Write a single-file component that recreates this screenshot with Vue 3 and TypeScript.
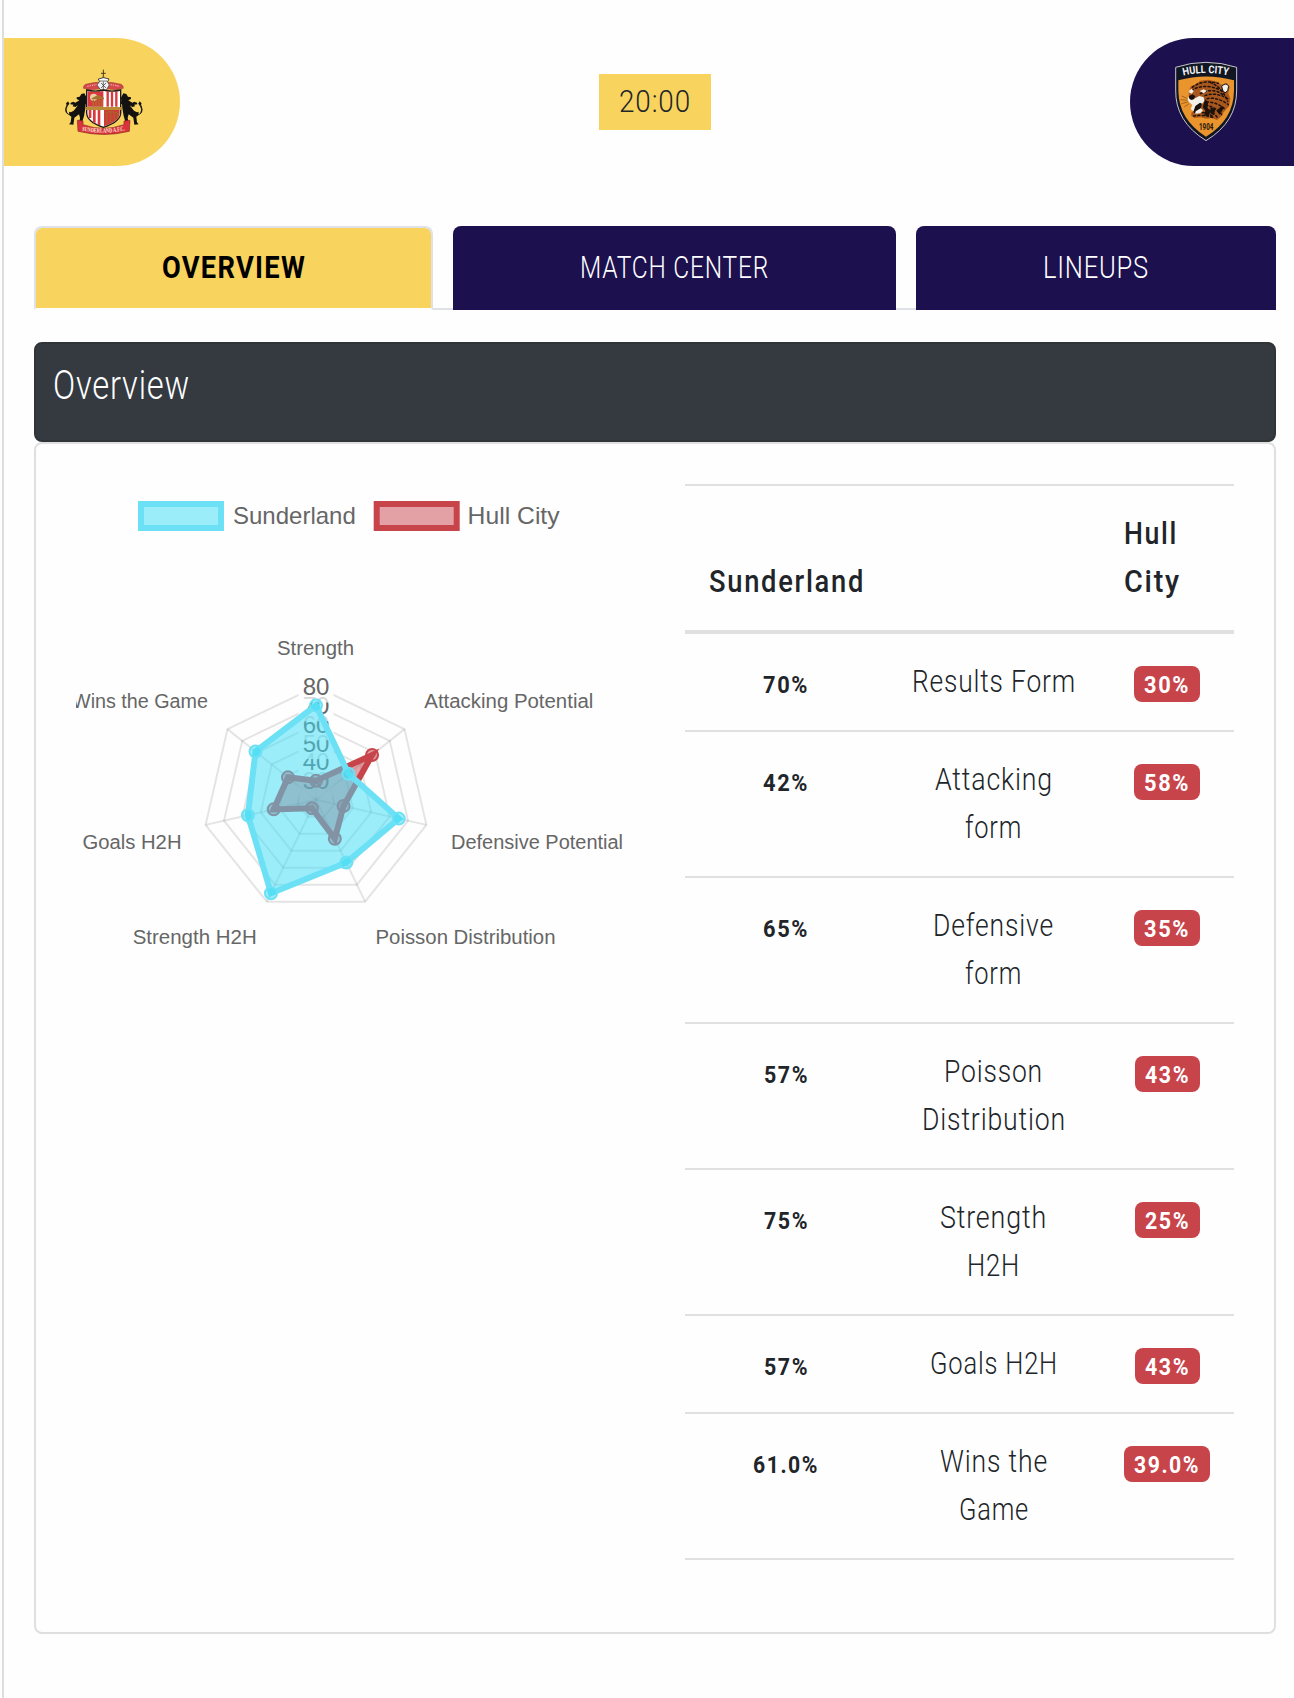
<script setup lang="ts">
import { h } from 'vue'

interface FitProps {
  text: string
  w: number
  size?: number
  weight?: number
  height?: number
  base?: number
  track?: number
}

// One line of condensed lettering, set to an exact width.
const FitText = (p: FitProps) =>
  h('svg', { width: p.w, height: p.height ?? 48, style: { display: 'block', overflow: 'visible' } }, [
    h(
      'text',
      {
        x: 0,
        y: p.base ?? 34,
        textLength: p.w,
        lengthAdjust: 'spacingAndGlyphs',
        fill: 'currentColor',
        'font-family': 'Roboto, "Liberation Sans", sans-serif',
        'font-size': p.size ?? 32,
        'font-weight': p.weight ?? 300,
        'letter-spacing': p.track ?? 1,
      },
      p.text,
    ),
  ])
FitText.props = ['text', 'w', 'size', 'weight', 'height', 'base', 'track']

interface Line { t: string; w: number }
interface Row { home: string; away: string; hw: number; lines: Line[] }

const rows: Row[] = [
  { home: '70%', away: '30%', hw: 46, lines: [{ t: 'Results Form', w: 164 }] },
  { home: '42%', away: '58%', hw: 46, lines: [{ t: 'Attacking', w: 118 }, { t: 'form', w: 57 }] },
  { home: '65%', away: '35%', hw: 46, lines: [{ t: 'Defensive', w: 121 }, { t: 'form', w: 57 }] },
  { home: '57%', away: '43%', hw: 45, lines: [{ t: 'Poisson', w: 99 }, { t: 'Distribution', w: 144 }] },
  { home: '75%', away: '25%', hw: 45, lines: [{ t: 'Strength', w: 107 }, { t: 'H2H', w: 53 }] },
  { home: '57%', away: '43%', hw: 45, lines: [{ t: 'Goals H2H', w: 128 }] },
  { home: '61.0%', away: '39.0%', hw: 66, lines: [{ t: 'Wins the', w: 108 }, { t: 'Game', w: 70 }] },
]

const cx = 316
const cy = 799.7
const radius = 113.2
const min = 20
const max = 80
const ticks = [30, 40, 50, 60, 70, 80]

const pointAt = (value: number, i: number): [number, number] => {
  const r = ((value - min) / (max - min)) * radius
  const a = (Math.PI * 2 * i) / 7
  return [cx + r * Math.sin(a), cy - r * Math.cos(a)]
}
const ring = (values: number[]) =>
  values.map((v, i) => pointAt(v, i).map((n) => n.toFixed(1)).join(',')).join(' ')
const tickY = (v: number) => pointAt(v, 0)[1]

const sets = [
  { key: 'away', values: [30, 58, 35, 43, 25, 43, 39] },
  { key: 'home', values: [70, 42, 65, 57, 75, 57, 61] },
]

const labels = [
  { t: 'Strength', x: 277, y: 655, w: 77 },
  { t: 'Attacking Potential', x: 424.3, y: 708, w: 169 },
  { t: 'Defensive Potential', x: 451, y: 849, w: 172 },
  { t: 'Poisson Distribution', x: 375.5, y: 944, w: 180 },
  { t: 'Strength H2H', x: 132.7, y: 944, w: 124 },
  { t: 'Goals H2H', x: 82.5, y: 849, w: 99 },
  { t: 'Wins the Game', x: 72, y: 708, w: 136 },
]
</script>

<template>
  <main class="page">
    <header class="match">
      <div class="club club-home">
        <svg class="crest-home" viewBox="190 145 245 205" width="81.7" height="68.3">
          <path d="M311 150V180M304 161H318" stroke="#4a3a22" stroke-width="3" fill="none" />
          <circle cx="311" cy="172" r="3" fill="#8a6a2c" />
          <path d="M296 178Q311 170 328 178L324 186H300Z" fill="#fff" stroke="#222" stroke-width="2.5" />
          <path d="M251 206q-1-8 6-12Q311 180 365 194q7 4 6 12-14 2-20 5-40-8-80 0-6-3-20-5Z" fill="#d4474a" stroke="#8a3a2e" stroke-width="1.5" />
          <path d="M263 200Q311 188 359 200" stroke="#f3b6a8" stroke-width="3.5" stroke-dasharray="4 3" fill="none" />
          <path d="M301 184h21l7 12-9 15h-17l-11-15Z" fill="#eef0f2" stroke="#333" stroke-width="2" />
          <path d="M304 190l15 15M319 190l-15 15M311 186v24" stroke="#333" stroke-width="2" />
          <g fill="#141211">
            <path d="M254 221l-9 2-5 8-9 2v5l8 4-12 7-6-3-8 3-1 5 9 1-2 5 8 2 8-5-13 16-9 5-5-2 1 11 6 4-2 17-5 6 13 1 3-21 14-10 3 11-2 10-5 5 12 2 7-23 4-23 1-13 12-1 2-8-12 1 1-11Z" />
            <path d="M215 286q-22-3-15-20 5-9 2-17M202 279q-8-8-1-22" fill="none" stroke="#141211" stroke-width="3" />
            <path d="M199 252l6-7 4 7-5 7Z" />
          </g>
          <g fill="#141211" transform="matrix(-1 0 0 1 625 0)">
            <path d="M254 221l-9 2-5 8-9 2v5l8 4-12 7-6-3-8 3-1 5 9 1-2 5 8 2 8-5-13 16-9 5-5-2 1 11 6 4-2 17-5 6 13 1 3-21 14-10 3 11-2 10-5 5 12 2 7-23 4-23 1-13 12-1 2-8-12 1 1-11Z" />
            <path d="M215 286q-22-3-15-20 5-9 2-17M202 279q-8-8-1-22" fill="none" stroke="#141211" stroke-width="3" />
            <path d="M199 252l6-7 4 7-5 7Z" />
          </g>
          <path d="M261 211q25 7 50 0 26 7 52 0v69q0 26-52 43-50-17-50-43Z" fill="#fff" stroke="#1d1a17" stroke-width="4" />
          <path d="M264 215q24 5 47-1v47h-47Z" fill="#d9383e" />
          <circle cx="282" cy="233" r="11" fill="#e9cfa6" />
          <path d="M276 236l18-10 19 8v5h-37Z" fill="#a8732d" />
          <path d="M281 240v21M289 240v21M298 240v21M307 240v21" stroke="#a8732d" stroke-width="4" />
          <path d="M324 215v46M337 216v45M350 216v45" stroke="#d9383e" stroke-width="7" />
          <path d="M271 271v24M284 271v38M298 271v45" stroke="#d9383e" stroke-width="8" />
          <path d="M313 271h47v12q-2 22-47 37Z" fill="#cf3b36" />
          <path d="M316 280q22-10 42 4M322 278v36M333 276v33M344 278v27M354 281v17" stroke="#a8642d" stroke-width="3.5" fill="none" />
          <path d="M258 262h108v9H258Z" fill="#b98b35" />
          <path d="M233 302l17 2v11q61 22 123 0v-11l18-2-2 33q-76 19-154 0Z" fill="#d9333b" stroke="#8c2824" stroke-width="2" />
          <path id="homeRibbon" d="M247 333Q311 346 379 331" fill="none" />
          <text font-family="Liberation Serif, serif" font-size="19" font-weight="700" fill="#ffe6dc">
            <textPath href="#homeRibbon" textLength="130" lengthAdjust="spacingAndGlyphs">SUNDERLAND A.F.C.</textPath>
          </text>
        </svg>
      </div>
      <div class="kickoff"><FitText text="20:00" :w="72" /></div>
      <div class="club club-away">
        <svg class="crest-away" viewBox="185 120 200 250" width="66.7" height="83.3">
          <path d="M196 142Q286 112 379 142V210Q380 306 287 362Q194 304 196 210Z" fill="#111722" stroke="#c9c6cf" stroke-width="3" />
          <path d="M204 181Q287 158 371 181V212Q370 299 287 350Q205 298 204 212Z" fill="#ea942e" />
          <path id="awayArc" d="M219 167Q287 151 359 167" fill="none" />
          <text font-family="Roboto, sans-serif" font-size="32" font-weight="700" fill="#f4f4f6">
            <textPath href="#awayArc" textLength="136" lengthAdjust="spacingAndGlyphs">HULL CITY</textPath>
          </text>
          <path d="M236 216l5-17 13-5 16-12 25-3 25 6 13 9 17-4 8 12-4 18 6 16-4 23-15 16-10 16-11 9-14-6-18 2-17-4-18 2-11-7 2-11 16-2 5-12-8-12-16-8-6-13Z" fill="#a9581d" />
          <g fill="none" stroke="#1d120c" stroke-width="4.5" stroke-linecap="round" stroke-dasharray="6 7">
            <path d="M246 202q30-24 78-12" />
            <path d="M243 211q44-24 92 2" />
            <path d="M270 221q40-20 68 4" />
            <path d="M284 227q34-12 70 10" />
            <path d="M290 236q32-6 64 18" />
            <path d="M288 246q34 0 58 24" />
            <path d="M286 256q30 4 48 28" />
            <path d="M284 266q24 6 38 28" />
            <path d="M250 288q28-6 62 6" />
            <path d="M276 278q16 0 32 12" />
            <path d="M300 188q34 12 52 56" />
          </g>
          <path d="M284 238l10 8-3 16 9 14-6 14-12-4 3-14-8-10ZM300 262l16 4-6 20-10-6ZM318 272l16-14 8 4-14 22Z" fill="#1d120c" />
          <path d="M334 199q14-14 21 0 0 15-11 20-9-7-10-20Z" fill="#f3efe9" stroke="#111" stroke-width="3" />
          <path d="M236 212l8-6 6 8-6 7-7-3ZM268 213l12-5 9 5-9 7Z" fill="#f3efe9" />
          <path d="M231 234l10-4 5 9 21-11 13 4 2 11-10 13-15 5-8 13-8-7 5-12-11-10Z" fill="#f3efe9" />
          <path d="M236 228l11-5 8 6-5 9-8 2-6-5ZM255 258l14-10 6 3-6 21-14 9-6-5Z" fill="#17100d" />
          <path d="M256 274l15-9 7 6-8 9-16 1Z" fill="#f3efe9" />
          <path d="M232 236l-18-8M231 241l-20-2M233 246l-20 5M236 251l-14 10" stroke="#5a3210" stroke-width="1.5" />
          <text x="266" y="329" font-family="Roboto, sans-serif" font-size="28" font-weight="800" fill="#2a1a0c" textLength="43" lengthAdjust="spacingAndGlyphs">1904</text>
        </svg>
      </div>
    </header>

    <nav class="tabs">
      <a class="tab active"><FitText text="OVERVIEW" :w="144" :weight="700" :track="1.5" /></a>
      <a class="tab tab-center"><FitText text="MATCH CENTER" :w="189" /></a>
      <a class="tab tab-lineups"><FitText text="LINEUPS" :w="106" /></a>
    </nav>

    <section class="title-bar">
      <FitText text="Overview" :w="137" :size="40" :height="60" :base="40.6" />
    </section>

    <section class="card">
      <svg class="chart" viewBox="76 484 555 555" width="555" height="555">
        <g class="legend">
          <rect class="home" x="141" y="504" width="80" height="24" />
          <text x="233" y="524.2">Sunderland</text>
          <rect class="away" x="376.7" y="504" width="80" height="24" />
          <text x="467.6" y="524.2" textLength="92" lengthAdjust="spacingAndGlyphs">Hull City</text>
        </g>
        <g class="grid">
          <polygon v-for="t in ticks" :key="t" :points="ring(Array(7).fill(t))" />
          <line
            v-for="i in 7"
            :key="i"
            :x1="cx"
            :y1="cy"
            :x2="pointAt(max, i - 1)[0]"
            :y2="pointAt(max, i - 1)[1]"
          />
        </g>
        <g class="labels">
          <text
            v-for="l in labels"
            :key="l.t"
            :x="l.x"
            :y="l.y"
            :textLength="l.w"
            lengthAdjust="spacingAndGlyphs"
          >{{ l.t }}</text>
        </g>
        <g class="ticks">
          <template v-for="t in ticks" :key="t">
            <rect :x="cx - 17.4" :y="tickY(t) - 16" width="34.8" height="32" />
            <text :x="cx" :y="tickY(t) + 8.4">{{ t }}</text>
          </template>
        </g>
        <g v-for="s in sets" :key="s.key">
          <polygon :class="s.key" :points="ring(s.values)" />
          <circle
            v-for="(v, i) in s.values"
            :key="i"
            class="dot"
            :class="s.key"
            :cx="pointAt(v, i)[0]"
            :cy="pointAt(v, i)[1]"
            r="6"
          />
        </g>
      </svg>

      <table class="stats">
        <colgroup>
          <col class="c1" />
          <col class="c2" />
          <col class="c3" />
        </colgroup>
        <thead>
          <tr>
            <th><FitText text="Sunderland" :w="156" :weight="500" :track="2" /></th>
            <th></th>
            <th>
              <FitText text="Hull" :w="54" :weight="500" :track="2" />
              <FitText text="City" :w="57" :weight="500" :track="2" />
            </th>
          </tr>
        </thead>
        <tbody>
          <tr v-for="(r, i) in rows" :key="i">
            <td><span class="badge"><FitText :text="r.home" :w="r.hw" :size="24.5" :weight="700" :height="36" :base="26.6" :track="1.8" /></span></td>
            <td><FitText v-for="l in r.lines" :key="l.t" class="line" :text="l.t" :w="l.w" /></td>
            <td><span class="badge red"><FitText :text="r.away" :w="r.hw" :size="24.5" :weight="700" :height="36" :base="26.6" :track="1.8" /></span></td>
          </tr>
        </tbody>
      </table>
    </section>
  </main>
</template>

<style>
body {
  background: #fefefe;
}
</style>

<style scoped>
.page {
  box-sizing: border-box;
  width: 1294px;
  height: 1698px;
  margin-left: 2px;
  max-width: calc(100vw - 2px);
  border-left: 2px solid #dedede;
  padding-top: 38px;
  overflow: hidden;
  color: #212529;
  font-family: Roboto, 'Liberation Sans', sans-serif;
}
.match {
  display: flex;
  justify-content: space-between;
  align-items: center;
  height: 128px;
}
.club {
  box-sizing: border-box;
  height: 128px;
}
.club svg {
  display: block;
}
.club-home {
  width: 176px;
  padding: 30.3px 0 0 59.3px;
  background: #f8d45f;
  border-radius: 0 64px 64px 0;
}
.club-away {
  width: 164px;
  padding: 22px 0 0 41.7px;
  background: #1c104f;
  border-radius: 64px 0 0 64px;
}
.kickoff {
  display: flex;
  align-items: center;
  justify-content: center;
  width: 112px;
  height: 56px;
  background: #f8d45f;
}
.tabs {
  display: flex;
  gap: 20px;
  box-sizing: border-box;
  width: 1242px;
  height: 84px;
  margin: 60px 0 0 30px;
  box-shadow: inset 0 -2px #dee2e6;
}
.tab {
  box-sizing: border-box;
  display: flex;
  align-items: center;
  justify-content: center;
  height: 84px;
  border-radius: 8px 8px 0 0;
  background: #1c104f;
  color: #fff;
}
.active {
  width: 399px;
  border: 2px solid #dee2e6;
  border-bottom-color: #fefefe;
  background: #f8d45f;
  background-clip: padding-box;
  color: #000;
}
.tab-center {
  width: 443px;
}
.tab-lineups {
  width: 360px;
}
.title-bar {
  box-sizing: border-box;
  width: 1242px;
  height: 100px;
  margin: 32px 0 0 30px;
  padding: 14px 0 0 17px;
  border: 2px solid #2f3437;
  border-radius: 8px;
  background: #343a40;
  color: #fff;
}
.card {
  box-sizing: border-box;
  display: flex;
  justify-content: space-between;
  align-items: flex-start;
  width: 1242px;
  height: 1192px;
  margin-left: 30px;
  padding: 40px 40px 72px;
  border: 2px solid #dfdfdf;
  border-radius: 8px;
}
.chart {
  display: block;
  overflow: hidden;
  font-family: 'Liberation Sans', Arial, sans-serif;
}
.chart text {
  fill: #666;
}
.legend text {
  font-size: 24px;
}
.labels text {
  font-size: 20px;
}
.grid {
  fill: none;
  stroke: rgba(0, 0, 0, 0.1);
  stroke-width: 2;
}
.ticks rect {
  fill: rgba(255, 255, 255, 0.75);
}
.ticks text {
  font-size: 24px;
  text-anchor: middle;
}
.home {
  fill: rgba(64, 221, 245, 0.52);
  stroke: #6ce1f5;
  stroke-width: 6;
}
.away {
  fill: rgba(200, 68, 75, 0.5);
  stroke: #c8444b;
  stroke-width: 6;
}
.dot {
  stroke-width: 2;
}
.stats {
  width: 549px;
  table-layout: fixed;
  border-collapse: separate;
  border-spacing: 0;
  border-bottom: 2px solid #dee0e2;
}
.c1 {
  width: 202px;
}
.c2 {
  width: 213px;
}
.c3 {
  width: 134px;
}
th,
td {
  padding: 24px;
  border-top: 2px solid #dee0e2;
  vertical-align: top;
  text-align: left;
}
th {
  vertical-align: bottom;
  border-bottom: 4px solid #dee0e2;
}
tbody tr:first-child td {
  border-top: 0;
}
td {
  text-align: center;
  line-height: 0;
}
.line {
  margin: 0 auto;
}
td:first-child,
td:last-child {
  padding: 32px 0 28px;
}
.badge {
  display: inline-block;
  height: 36px;
  padding: 0 10px;
  border-radius: 8px;
  vertical-align: top;
}
.red {
  background: #c8444b;
  color: #fff;
}
</style>
